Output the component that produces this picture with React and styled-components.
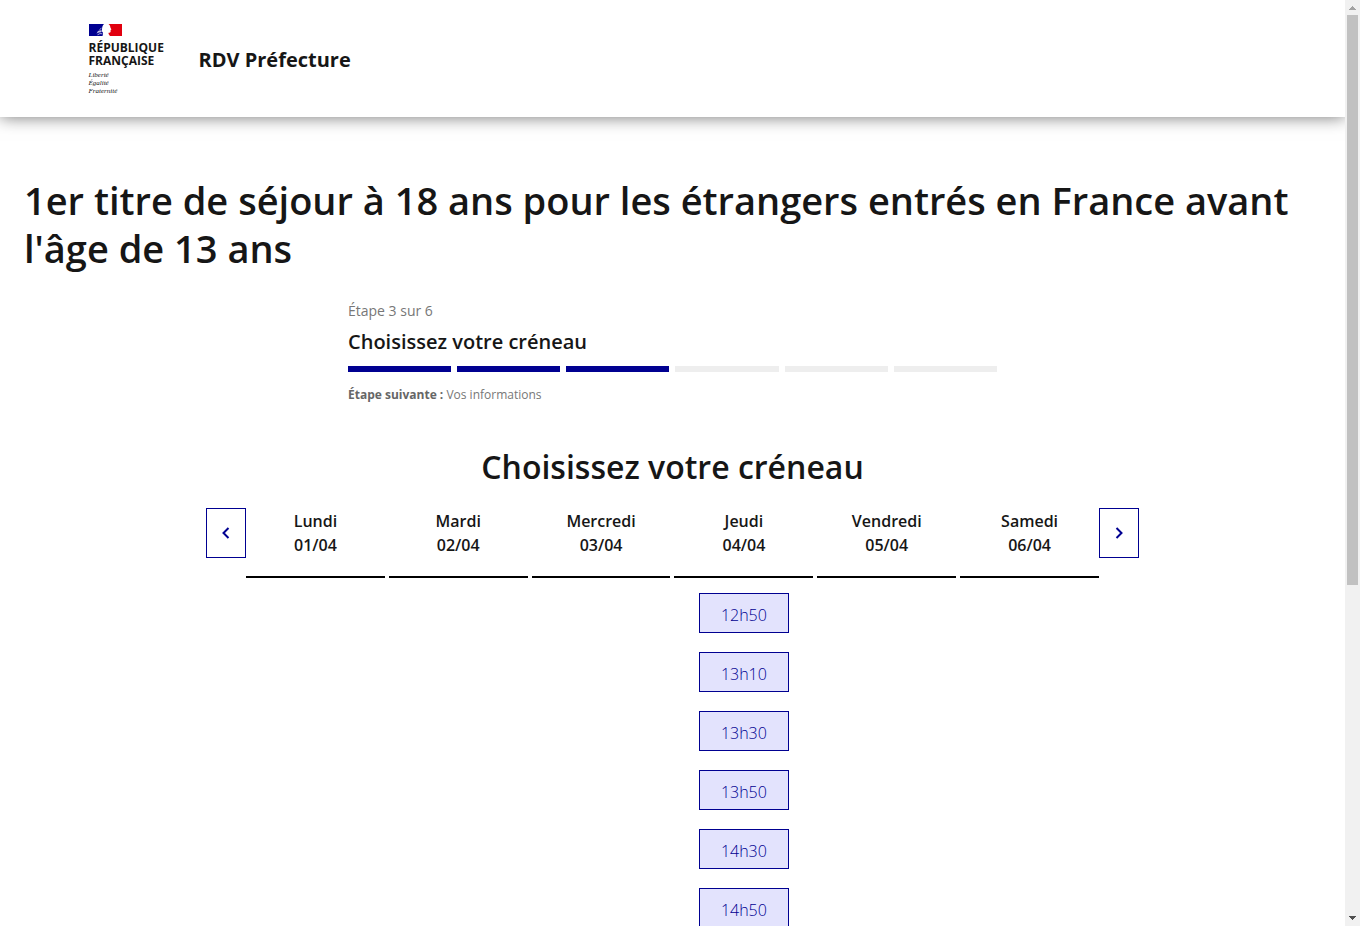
import React, { useState } from 'react'
import styled, { createGlobalStyle } from 'styled-components'

const days = [
  { name: 'Lundi', date: '01/04', slots: [] },
  { name: 'Mardi', date: '02/04', slots: [] },
  { name: 'Mercredi', date: '03/04', slots: [] },
  { name: 'Jeudi', date: '04/04', slots: ['12h50', '13h10', '13h30', '13h50', '14h30', '14h50', '15h10', '15h30'] },
  { name: 'Vendredi', date: '05/04', slots: [] },
  { name: 'Samedi', date: '06/04', slots: [] },
]

const steps = [1, 2, 3, 4, 5, 6]
const currentStep = 3

function Flag() {
  return (
    <svg width="33" height="12" viewBox="0 0 33 12" aria-hidden="true">
      <rect width="17" height="12" fill="#000091" />
      <rect x="17" width="16" height="12" fill="#e1000f" />
      <path
        d="M15 0h4.500c1.200.8 1.800 2 1.900 3.400l1 2.200-.8.5v1.700c-.2 1-1.200.9-2 .9-.4.9.4 2 1.400 3.300h-7.500c.4-1.400.8-2.400.4-3.400-1-.8-1.200-2-.9-3.600.2-2.200.8-3.800 2-5z"
        fill="#fff"
      />
      <path d="M7.500 9.500l1.500-2.500 2.200-.8 2 .6-1.200 1.400-2 .4z" fill="#b9b9e0" />
      <path d="M8.500 10.800l2.500-1.200 2.500.2M10.500 5.600l2-1.400" stroke="#a5a5d8" strokeWidth="1" fill="none" />
    </svg>
  )
}

function Chevron({ right }) {
  return (
    <svg width="16" height="16" viewBox="0 0 16 16" aria-hidden="true">
      <path
        d={right ? 'M5.5 3L10.5 8L5.5 13' : 'M10.5 3L5.5 8L10.5 13'}
        stroke="#000091"
        strokeWidth="2"
        fill="none"
      />
    </svg>
  )
}

export default function App() {
  const [selected, setSelected] = useState(null)

  return (
    <Shell>
      <GlobalStyle />
      <Page>
        <Header>
          <HeaderBody>
            <Brand href="#">
              <Flag />
              <BrandName>
                République
                <br />
                Française
              </BrandName>
              <Motto>
                Liberté
                <br />
                Égalité
                <br />
                Fraternité
              </Motto>
            </Brand>
            <ServiceLink href="#">RDV Préfecture</ServiceLink>
          </HeaderBody>
        </Header>

        <Main>
          <Title>1er titre de séjour à 18 ans pour les étrangers entrés en France avant l'âge de 13 ans</Title>

          <Stepper>
            <StepState>Étape 3 sur 6</StepState>
            <StepTitle>Choisissez votre créneau</StepTitle>
            <Steps>
              {steps.map((step) => (
                <Step key={step} $done={step <= currentStep} />
              ))}
            </Steps>
            <StepNext>
              <strong>Étape suivante :</strong> Vos informations
            </StepNext>
          </Stepper>

          <Subtitle>Choisissez votre créneau</Subtitle>

          <Calendar>
            <NavButton type="button" aria-label="Semaine précédente">
              <Chevron />
            </NavButton>
            <Days>
              {days.map((day) => (
                <Day key={day.date}>
                  <DayHead>
                    {day.name}
                    <br />
                    {day.date}
                  </DayHead>
                  <Slots>
                    {day.slots.map((slot) => (
                      <Slot key={slot} type="button" aria-pressed={selected === slot} onClick={() => setSelected(slot)}>
                        {slot}
                      </Slot>
                    ))}
                  </Slots>
                </Day>
              ))}
            </Days>
            <NavButton type="button" aria-label="Semaine suivante">
              <Chevron right />
            </NavButton>
          </Calendar>
        </Main>
      </Page>
      <ScrollBar aria-hidden="true">
        <ScrollArrow viewBox="0 0 15 15">
          <path d="M4 10h7v-1h-1v-1h-1v-1h-1v-1h-1v1h-1v1h-1v1h-1z" fill="#a3a3a3" />
        </ScrollArrow>
        <ScrollTrack>
          <ScrollThumb />
        </ScrollTrack>
        <ScrollArrow viewBox="0 0 15 15">
          <path d="M4 5h7v1h-1v1h-1v1h-1v1h-1v-1h-1v-1h-1v-1h-1z" fill="#505050" />
        </ScrollArrow>
      </ScrollBar>
    </Shell>
  )
}

const GlobalStyle = createGlobalStyle`
  * {
    box-sizing: border-box;
  }
  body {
    margin: 0;
    background: #fff;
    color: #161616;
    font-family: "Open Sans", "Noto Sans", sans-serif;
    font-size: 16px;
    line-height: 24px;
  }
  button {
    font-family: inherit;
    cursor: pointer;
  }
`

const Shell = styled.div`
  display: flex;
  height: 100vh;
`

const Page = styled.div`
  flex: 1;
  min-width: 0;
  overflow-y: auto;
  scrollbar-width: none;
`

const Header = styled.header`
  background: #fff;
  box-shadow: 0 0 16px rgba(0, 0, 0, 0.55);
`

const HeaderBody = styled.div`
  display: flex;
  align-items: center;
  gap: 32px;
  max-width: 1200px;
  margin: 0 auto;
  padding: 24px 16px 22px;
`

const Brand = styled.a`
  display: flex;
  flex-direction: column;
  align-items: flex-start;
  min-width: 78px;
  color: #161616;
  text-decoration: none;
`

const BrandName = styled.span`
  margin-top: 5px;
  font-size: 12px;
  font-weight: 700;
  line-height: 13px;
  text-transform: uppercase;
`

const Motto = styled.span`
  margin-top: 4px;
  font-family: "Liberation Serif", serif;
  font-size: 7px;
  font-style: italic;
  line-height: 8px;
`

const ServiceLink = styled.a`
  color: #161616;
  font-size: 20px;
  font-weight: 700;
  line-height: 28px;
  text-decoration: none;
`

const Main = styled.main`
  padding: 56px 24px 24px;
`

const Title = styled.h1`
  margin: 0 0 24px;
  padding-top: 3px;
  font-size: 38px;
  font-weight: 600;
  line-height: 48px;
`

const Stepper = styled.section`
  display: flex;
  flex-direction: column;
  max-width: 649px;
  margin: 0 auto 42px;
  padding-top: 3px;
`

const StepState = styled.span`
  color: #777;
  font-size: 14px;
  font-weight: 400;
  line-height: 24px;
`

const StepTitle = styled.h2`
  margin: 5px 0 10px;
  font-size: 20px;
  font-weight: 600;
  line-height: 28px;
`

const Steps = styled.div`
  display: grid;
  grid-template-columns: repeat(6, 1fr);
  gap: 6px;
`

const Step = styled.span`
  height: 6px;
  background: ${(props) => (props.$done ? '#000091' : '#eee')};
`

const StepNext = styled.p`
  margin: 13px 0 0;
  color: #777;
  font-size: 12px;
  line-height: 20px;

  strong {
    color: #666;
    font-weight: 700;
  }
`

const Subtitle = styled.h2`
  margin: 0 0 21px;
  font-size: 32px;
  font-weight: 600;
  line-height: 40px;
  text-align: center;
`

const Calendar = styled.section`
  display: flex;
  align-items: flex-start;
  max-width: 933px;
  margin: 0 auto;
`

const NavButton = styled.button`
  display: flex;
  align-items: center;
  justify-content: center;
  width: 40px;
  height: 50px;
  padding: 0;
  border: 1px solid #000091;
  background: #fff;
`

const Days = styled.div`
  display: grid;
  flex: 1;
  grid-template-columns: repeat(6, 1fr);
  gap: 4px;
`

const Day = styled.div`
  min-width: 0;
`

const DayHead = styled.div`
  height: 70px;
  padding-top: 1px;
  border-bottom: 2px solid #000;
  font-weight: 600;
  text-align: center;
`

const Slots = styled.div`
  display: flex;
  flex-direction: column;
  align-items: center;
  gap: 19px;
  padding-top: 15px;
`

const Slot = styled.button`
  width: 90px;
  height: 40px;
  padding: 4px 0 0;
  border: 1px solid #000091;
  background: #e3e3fd;
  color: #000091;
  font-size: 16px;
  font-weight: 300;
`

const ScrollBar = styled.div`
  display: flex;
  flex-direction: column;
  width: 15px;
  background: #f1f1f1;
`

const ScrollArrow = styled.svg`
  width: 15px;
  height: 15px;
`

const ScrollTrack = styled.div`
  display: grid;
  flex: 1;
  grid-template-rows: 7fr 4fr;
  padding: 0 2px;
`

const ScrollThumb = styled.div`
  background: #c1c1c1;
`
